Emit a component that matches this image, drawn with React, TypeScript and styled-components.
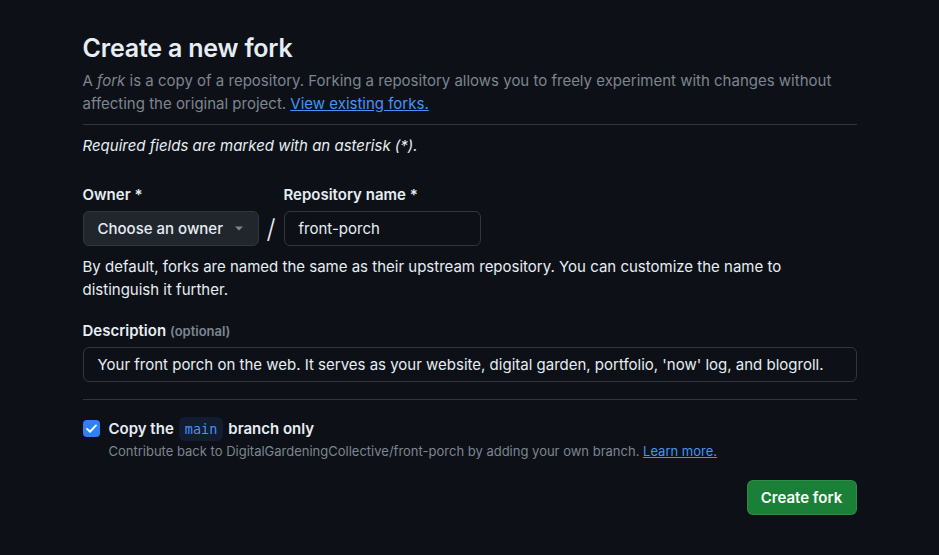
import React from "react";
import styled, { createGlobalStyle } from "styled-components";

const Global = createGlobalStyle`
  html, body { margin: 0; padding: 0; background: #0d1117; }
  body {
    font-family: Inter, "Noto Sans", "Liberation Sans", sans-serif;
    color: #e6edf3;
    font-size: 15px;
    -webkit-font-smoothing: antialiased;
  }
`;

const Page = styled.div`
  min-height: 555px;
  background: #0d1117;
  box-sizing: border-box;
  padding-top: 32px;
`;

const Container = styled.main`
  width: 774px;
  margin: 0 auto;
`;

const Subhead = styled.header`
  border-bottom: 1px solid #30363d;
  padding-bottom: 9px;
`;

const Heading = styled.h1`
  margin: 0 0 5px;
  font-size: 25px;
  line-height: 32px;
  font-weight: 600;
  letter-spacing: -0.2px;
  color: #e6edf3;
`;

const Lead = styled.p`
  margin: 0;
  font-size: 15px;
  line-height: 23px;
  color: #7d8590;
`;

const Link = styled.a`
  color: #4493f8;
  text-decoration: underline;
  cursor: pointer;
`;

const Note = styled.p`
  margin: 10px 0 0;
  font-style: italic;
  font-size: 15px;
  line-height: 21px;
  color: #e6edf3;
`;

const NameRow = styled.div`
  display: flex;
  align-items: flex-end;
  margin-top: 29px;
`;

const Field = styled.div`
  display: flex;
  flex-direction: column;
`;

const Label = styled.label`
  font-weight: 600;
  font-size: 15px;
  line-height: 20px;
  margin-bottom: 6px;
  color: #e6edf3;
`;

const Optional = styled.span`
  font-size: 13px;
  color: #7d8590;
  font-weight: 600;
`;

const Select = styled.button`
  display: flex;
  align-items: center;
  justify-content: space-between;
  width: 176px;
  height: 35px;
  box-sizing: border-box;
  padding: 0 15px 0 14px;
  background: #21262d;
  border: 1px solid #30363d;
  border-radius: 6px;
  color: #e6edf3;
  font-family: inherit;
  font-size: 15px;
  font-weight: 500;
`;

const Slash = styled.span`
  width: 25px;
  text-align: center;
  font-size: 26px;
  line-height: 35px;
  height: 35px;
  color: #e6edf3;
  font-weight: 300;
`;

const Input = styled.div<{ $w?: number }>`
  box-sizing: border-box;
  width: ${(p) => (p.$w ? `${p.$w}px` : "100%")};
  height: 35px;
  display: flex;
  align-items: center;
  padding: 0 14px;
  border: 1px solid #30363d;
  border-radius: 6px;
  background: #0d1117;
  color: #e6edf3;
  font-size: 15px;
  white-space: nowrap;
`;

const Help = styled.p`
  margin: 9px 0 0;
  font-size: 15px;
  line-height: 23px;
  color: #e6edf3;
`;

const DescField = styled(Field)`
  margin-top: 20px;
  padding-bottom: 17px;
  border-bottom: 1px solid #30363d;
`;

const CheckRow = styled.div`
  display: flex;
  align-items: flex-start;
  gap: 9px;
  margin-top: 20px;
`;

const Box = styled.span`
  width: 17px;
  height: 17px;
  border-radius: 4px;
  background: #2f81f7;
  display: flex;
  align-items: center;
  justify-content: center;
  flex-shrink: 0;
`;

const CheckText = styled.div`
  display: flex;
  flex-direction: column;
`;

const CheckLabel = styled.div`
  font-weight: 600;
  font-size: 15px;
  line-height: 17px;
  height: 17px;
  display: flex;
  align-items: center;
  gap: 5px;
`;

const Branch = styled.code`
  font-family: "DejaVu Sans Mono", "Liberation Mono", monospace;
  font-size: 13.5px;
  font-weight: 400;
  color: #4493f8;
  background: #121d2f;
  border-radius: 6px;
  padding: 4px 6px;
  line-height: 16px;
`;

const Small = styled.p`
  margin: 5px 0 0;
  font-size: 13px;
  line-height: 18px;
  color: #7d8590;
`;

const Actions = styled.div`
  display: flex;
  justify-content: flex-end;
  margin-top: 20px;
`;

const Primary = styled.button`
  height: 35px;
  width: 110px;
  padding: 0;
  background: #1a7f37;
  border: 1px solid rgba(240, 246, 252, 0.1);
  border-radius: 6px;
  color: #ffffff;
  font-family: inherit;
  font-size: 15px;
  font-weight: 600;
`;

export default function App() {
  return (
    <>
      <Global />
      <Page>
        <Container>
          <Subhead>
            <Heading>Create a new fork</Heading>
            <Lead>
              A <em>fork</em> is a copy of a repository. Forking a repository allows you to freely experiment with
              changes without affecting the original project. <Link>View existing forks.</Link>
            </Lead>
          </Subhead>
          <Note>Required fields are marked with an asterisk (*).</Note>
          <NameRow>
            <Field>
              <Label>Owner *</Label>
              <Select>
                Choose an owner
                <svg width="8" height="5" viewBox="0 0 8 5">
                  <path d="M0 0.5 L8 0.5 L4 4.5 Z" fill="#7d8590" />
                </svg>
              </Select>
            </Field>
            <Slash>/</Slash>
            <Field>
              <Label>Repository name *</Label>
              <Input $w={197}>front-porch</Input>
            </Field>
          </NameRow>
          <Help>
            By default, forks are named the same as their upstream repository. You can customize the name to
            distinguish it further.
          </Help>
          <DescField>
            <Label>
              Description <Optional>(optional)</Optional>
            </Label>
            <Input>Your front porch on the web. It serves as your website, digital garden, portfolio, 'now' log, and blogroll.</Input>
          </DescField>
          <CheckRow>
            <Box>
              <svg width="13" height="13" viewBox="0 0 16 16">
                <path d="M2.5 8.5 L6.2 12 L13.5 4.2" stroke="#fff" strokeWidth="2.3" fill="none" strokeLinecap="round" strokeLinejoin="round" />
              </svg>
            </Box>
            <CheckText>
              <CheckLabel>
                Copy the <Branch>main</Branch> branch only
              </CheckLabel>
              <Small>
                Contribute back to DigitalGardeningCollective/front-porch by adding your own branch.{" "}
                <Link>Learn more.</Link>
              </Small>
            </CheckText>
          </CheckRow>
          <Actions>
            <Primary>Create fork</Primary>
          </Actions>
        </Container>
      </Page>
    </>
  );
}
